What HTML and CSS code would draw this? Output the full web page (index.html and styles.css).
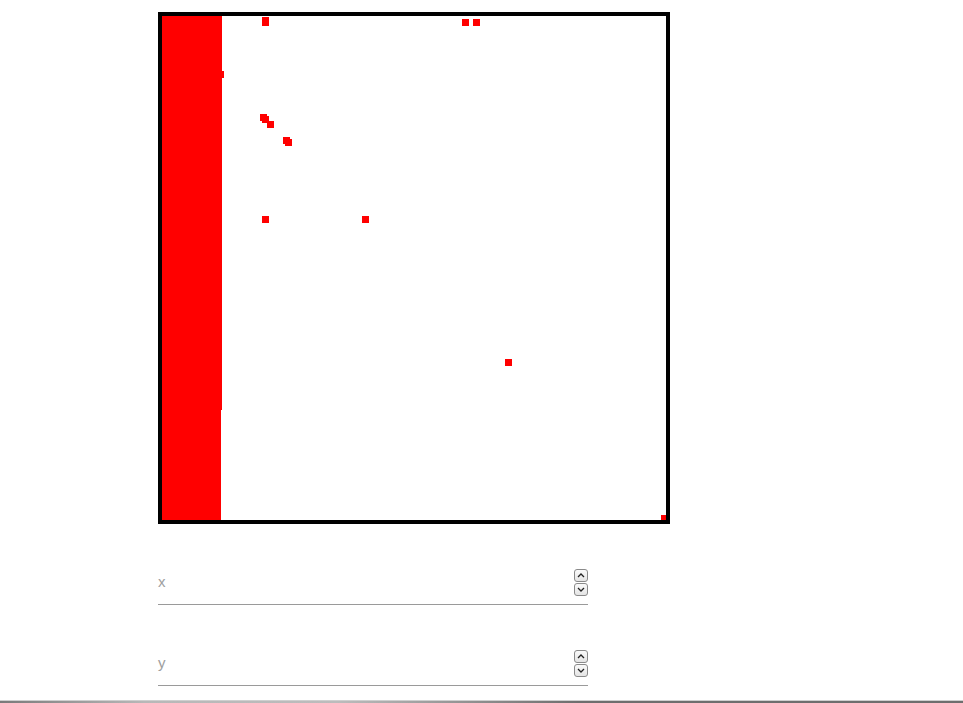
FILE: index.html
```html
<!DOCTYPE html>
<html>
	<head>
		<title>Grid</title>
		<link rel="stylesheet" href="styles.css">
	</head>
	<body>
		<div class="page">
			<div class="board">
				<svg width="504" height="504" viewBox="0 0 504 504">
					<rect x="0" y="0" width="60" height="394" fill="#f00"/>
					<rect x="0" y="394" width="59" height="110" fill="#f00"/>
					<rect x="55" y="55" width="7" height="7" fill="#f00"/>
					<rect x="100" y="1" width="7" height="7" fill="#f00"/>
					<rect x="100" y="3" width="7" height="7" fill="#f00"/>
					<rect x="300" y="3" width="7" height="7" fill="#f00"/>
					<rect x="311" y="3" width="7" height="7" fill="#f00"/>
					<rect x="98" y="98" width="7" height="7" fill="#f00"/>
					<rect x="100" y="100" width="7" height="7" fill="#f00"/>
					<rect x="105" y="105" width="7" height="7" fill="#f00"/>
					<rect x="121" y="121" width="7" height="7" fill="#f00"/>
					<rect x="123" y="123" width="7" height="7" fill="#f00"/>
					<rect x="100" y="200" width="7" height="7" fill="#f00"/>
					<rect x="200" y="200" width="7" height="7" fill="#f00"/>
					<rect x="343" y="343" width="7" height="7" fill="#f00"/>
					<rect x="499" y="499" width="7" height="7" fill="#f00"/>
				</svg>
			</div>

			<div class="field">
				<span class="label">x</span>
				<div class="spin">
					<span class="spin-btn">
						<svg width="8" height="5" viewBox="0 0 8 5"><path d="M1 4 L4 1 L7 4" fill="none" stroke="#222" stroke-width="1.3"/></svg>
					</span>
					<span class="spin-btn">
						<svg width="8" height="5" viewBox="0 0 8 5"><path d="M1 1 L4 4 L7 1" fill="none" stroke="#222" stroke-width="1.3"/></svg>
					</span>
				</div>
			</div>

			<div class="field">
				<span class="label">y</span>
				<div class="spin">
					<span class="spin-btn">
						<svg width="8" height="5" viewBox="0 0 8 5"><path d="M1 4 L4 1 L7 4" fill="none" stroke="#222" stroke-width="1.3"/></svg>
					</span>
					<span class="spin-btn">
						<svg width="8" height="5" viewBox="0 0 8 5"><path d="M1 1 L4 4 L7 1" fill="none" stroke="#222" stroke-width="1.3"/></svg>
					</span>
				</div>
			</div>
		</div>
		<div class="scrollbar"></div>
	</body>
</html>
```

FILE: styles.css
```css
body {
margin: 0;
background-color: white;
font-family: "Liberation Sans", Arial, sans-serif;
overflow: hidden;
}

.page {
padding: 12px 0 0 158px;
}

.board {
width: 504px;
height: 504px;
border: 4px solid black;
background-color: white;
}

.board svg {
display: block;
}

.field {
width: 430px;
height: 35px;
margin-top: 45px;
border-bottom: 1px solid #9a9a9a;
display: flex;
justify-content: space-between;
align-items: flex-start;
}

.field + .field {
margin-top: 45px;
}

.label {
color: #9e9e9e;
font-size: 15px;
margin-top: 4px;
}

.spin {
display: flex;
flex-direction: column;
margin-top: 0;
margin-right: 0;
}

.spin-btn {
width: 12px;
height: 11px;
border: 1px solid #8a8a8a;
border-radius: 3px;
background: linear-gradient(#fafafa, #e4e4e4);
display: flex;
align-items: center;
justify-content: center;
}

.spin-btn + .spin-btn {
margin-top: 1px;
}

.scrollbar {
position: fixed;
left: 0;
right: 0;
bottom: 0;
height: 2px;
border-top: 1px solid #cfcfcf;
background: linear-gradient(to right, #7a7a7a 0%, #b8b8b8 15%, #bcbcbc 35%, #6e6e6e 60%, #6e6e6e 100%);
}
```
